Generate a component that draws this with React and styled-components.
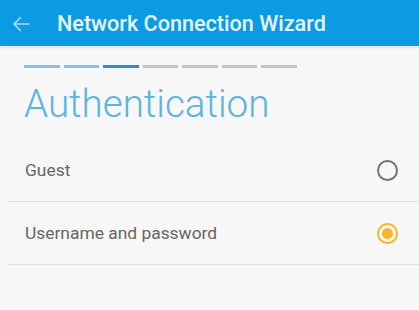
import React from "react";
import styled, { createGlobalStyle } from "styled-components";

const Global = createGlobalStyle`
  html, body { margin: 0; padding: 0; background: #f7f7f7; }
  body { font-family: Roboto, "Noto Sans", sans-serif; }
`;

const Page = styled.div`
  width: 419px;
  height: 310px;
  background: #f7f7f7;
  overflow: hidden;
`;

const AppBar = styled.header`
  height: 46px;
  background: #0b9be4;
  display: flex;
  align-items: center;
  padding-left: 12px;
  box-shadow: 0 2px 3px rgba(0, 0, 0, 0.08);
  position: relative;
`;

const BackButton = styled.span`
  display: flex;
  width: 18px;
  height: 16px;
  margin-right: 27px;
  margin-top: 1px;
`;

const Title = styled.h1`
  margin: 0;
  font-size: 21.6px;
  font-weight: 500;
  color: #e6f5ff;
  letter-spacing: 0;
`;

const Content = styled.main`
  padding-top: 19px;
`;

const Steps = styled.div`
  display: flex;
  gap: 4px;
  padding-left: 24px;
`;

const Step = styled.span`
  width: 35.5px;
  height: 3px;
  background: ${(p) =>
    p.$state === "done" ? "#7cc6ec" : p.$state === "active" ? "#2291d8" : "#c4c4c4"};
`;

const Heading = styled.h2`
  margin: 13px 0 0 24px;
  font-size: 38.6px;
  line-height: 46px;
  font-weight: 300;
  color: #5ab4de;
`;

const List = styled.div`
  margin: 12px 0 0 8px;
`;

const Row = styled.label`
  display: flex;
  align-items: center;
  justify-content: space-between;
  height: 62px;
  padding: 0 21px 0 17px;
  border-bottom: 1px solid #e0e0e0;
`;

const RowText = styled.span`
  font-size: 17.4px;
  color: #666666;
`;

const Radio = styled.span`
  width: 21px;
  height: 21px;
  box-sizing: border-box;
  border-radius: 50%;
  border: 2px solid ${(p) => (p.$checked ? "#f8b62a" : "#747474")};
  display: flex;
  align-items: center;
  justify-content: center;
  &::after {
    content: "";
    display: ${(p) => (p.$checked ? "block" : "none")};
    width: 11px;
    height: 11px;
    border-radius: 50%;
    background: #f8b62a;
  }
`;

const steps = ["done", "done", "active", "todo", "todo", "todo", "todo"];

export default function App() {
  return (
    <Page>
      <Global />
      <AppBar>
        <BackButton>
          <svg width="18" height="16" viewBox="0 0 18 16" fill="none">
            <path
              d="M17 8H2M8.5 1.5L2 8l6.5 6.5"
              stroke="#a9dcf6"
              strokeWidth="1.6"
              strokeLinecap="round"
              strokeLinejoin="round"
            />
          </svg>
        </BackButton>
        <Title>Network Connection Wizard</Title>
      </AppBar>
      <Content>
        <Steps>
          {steps.map((s, i) => (
            <Step key={i} $state={s} />
          ))}
        </Steps>
        <Heading>Authentication</Heading>
        <List>
          <Row>
            <RowText>Guest</RowText>
            <Radio />
          </Row>
          <Row>
            <RowText>Username and password</RowText>
            <Radio $checked />
          </Row>
        </List>
      </Content>
    </Page>
  );
}
